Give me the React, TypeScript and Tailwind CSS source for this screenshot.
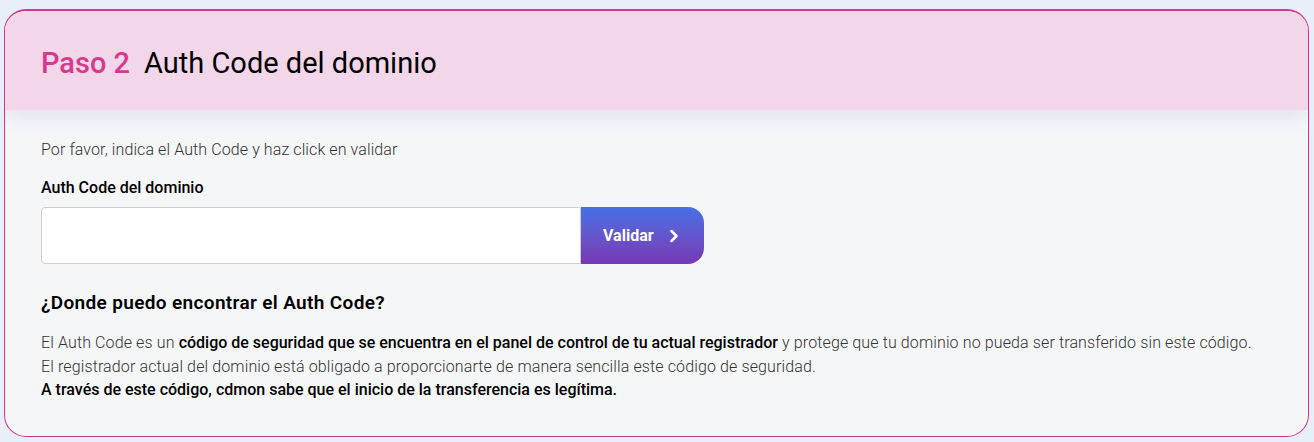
import { ChevronRight } from "lucide-react";

export default function App() {
  return (
    <div className="min-h-[442px] bg-[#e9eff8] pt-[9px] pb-[4px] pl-[4px] pr-[5px] font-['Roboto',sans-serif]">
      <div className="overflow-hidden rounded-[22px] border border-t-2 border-[#d2378c] bg-[#f5f6f8]">
        {/* Header */}
        <div className="relative z-10 flex h-[99px] items-center bg-[#f2d6e9] px-[36px] shadow-[0_6px_18px_rgba(120,140,190,0.18)]">
          <h2 className="pt-[6px] text-[29px] leading-none">
            <span className="font-medium text-[#d63a8e]">Paso 2</span>
            <span className="ml-[14px] font-normal text-black">Auth Code del dominio</span>
          </h2>
        </div>

        {/* Body */}
        <div className="px-[36px] pt-[29px] pb-[34px]">
          <p className="text-[16px] leading-[22px] font-light tracking-[0.1px] text-[#333]">
            Por favor, indica el Auth Code y haz click en validar
          </p>
          <label className="mt-[16px] block text-[16px] leading-[22px] font-medium text-black">
            Auth Code del dominio
          </label>
          <div className="mt-[8px] flex h-[57px]">
            <input
              type="text"
              className="h-full w-[540px] rounded-l-[4px] border border-[#cfcfcf] bg-white px-4 text-[16px] outline-none"
            />
            <button className="flex h-full w-[123px] items-center rounded-r-[16px] bg-gradient-to-b from-[#4270e4] to-[#7537b5] pl-[22px] text-[16px] font-bold text-white">
              Validar
              <ChevronRight className="ml-[10px] h-[20px] w-[20px]" strokeWidth={3} />
            </button>
          </div>

          <h3 className="mt-[26px] text-[19px] leading-[26px] font-semibold tracking-[0.35px] text-black">
            ¿Donde puedo encontrar el Auth Code?
          </h3>
          <div className="mt-[15px] text-[16px] leading-[23.5px] font-light tracking-[0.12px] text-[#333]">
            <p>
              El Auth Code es un{" "}
              <span className="font-medium tracking-normal text-black">
                código de seguridad que se encuentra en el panel de control de tu actual registrador
              </span>{" "}
              y protege que tu dominio no pueda ser transferido sin este código.
            </p>
            <p>El registrador actual del dominio está obligado a proporcionarte de manera sencilla este código de seguridad.</p>
            <p className="font-medium tracking-normal text-black">
              A través de este código, cdmon sabe que el inicio de la transferencia es legítima.
            </p>
          </div>
        </div>
      </div>
    </div>
  );
}
